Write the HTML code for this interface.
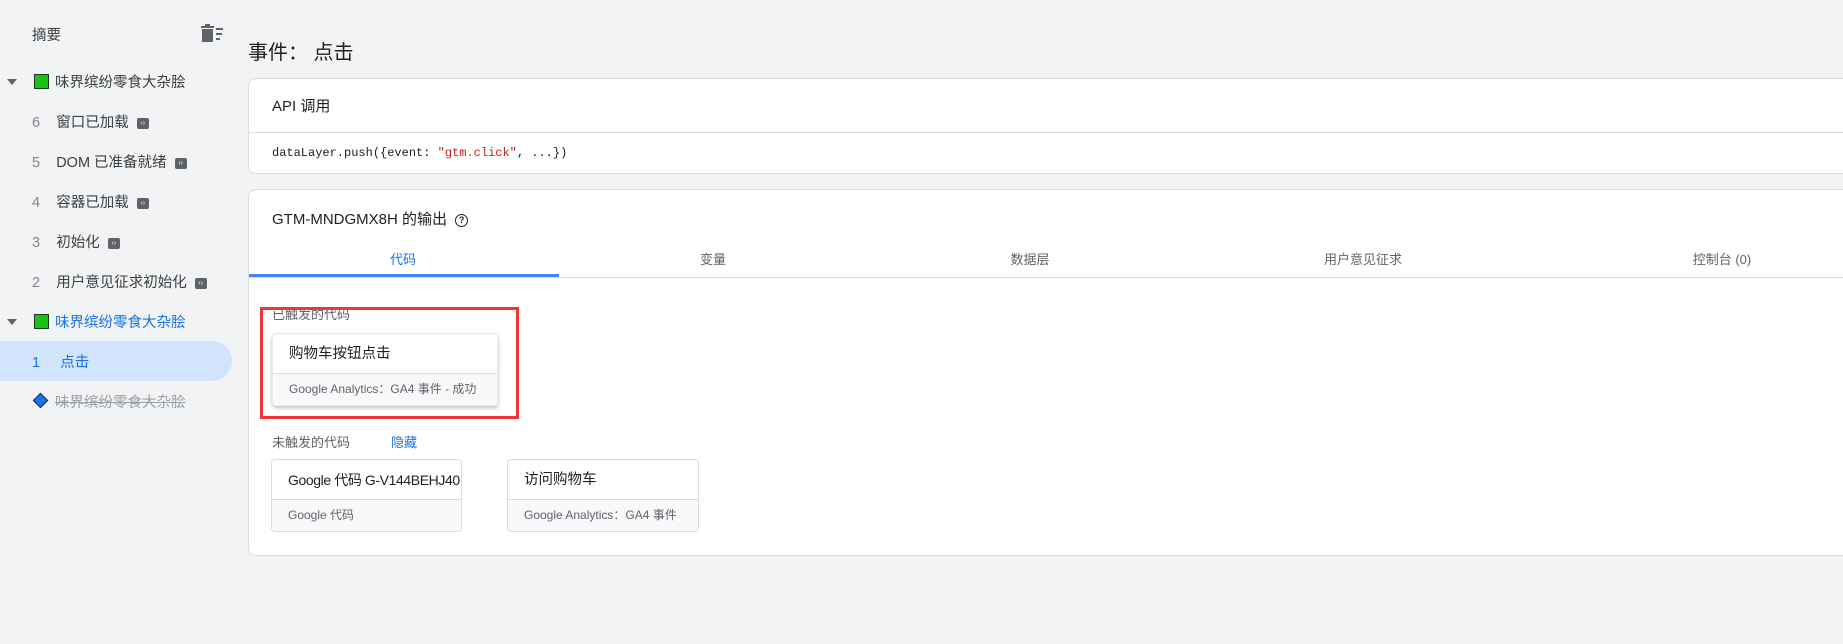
<!DOCTYPE html>
<html><head><meta charset="utf-8"><style>
*{box-sizing:border-box;margin:0;padding:0}
body{width:1843px;height:644px;overflow:hidden;background:#f1f3f4;font-family:"Liberation Sans","Noto Sans CJK SC",sans-serif;color:#202124;position:relative}
.a{position:absolute;white-space:nowrap}
.side{font-size:14.5px;color:#3c4043}
.num{color:#80868b}
.sq{position:absolute;width:15px;height:15px;background:#19c219;border:1px solid #1a3d1a}
.tri{position:absolute;width:0;height:0;border-left:5px solid transparent;border-right:5px solid transparent;border-top:6px solid #5f6368}
.ci{display:inline-block;width:12px;height:11px;background:#5f6368;border-radius:2px;vertical-align:middle;margin-left:8px;color:#fff;font-size:7px;line-height:11px;text-align:center}
.card{position:absolute;background:#fff;border:1px solid #dadce0;border-radius:8px;border-right:none;border-top-right-radius:0;border-bottom-right-radius:0}
.tag{position:absolute;background:#fff;border:1px solid #dadce0;border-radius:4px;overflow:hidden;white-space:nowrap}
.tag .t{height:40px;padding:0 16px;font-size:14.5px;line-height:40px;border-bottom:1px solid #dadce0;overflow:hidden}
.tag .s{height:31px;padding:0 16px;font-size:12px;line-height:31px;color:#5f6368;background:#f8f9fa;overflow:hidden}
.tab{position:absolute;top:249px;font-size:13px;color:#5f6368;transform:translateX(-50%)}
</style></head><body>
<div class="a side" style="left:32px;top:24px">摘要</div>
<svg class="a" style="left:201px;top:24px" width="22" height="18" viewBox="0 0 22 18"><rect x="4" y="0" width="5" height="2" fill="#5f6368"/><rect x="0" y="2" width="13" height="2" fill="#5f6368"/><rect x="1" y="5" width="11" height="13" fill="#5f6368"/><rect x="15" y="4" width="7" height="2" fill="#5f6368"/><rect x="15" y="9" width="6" height="2" fill="#5f6368"/><rect x="15" y="14" width="4" height="2" fill="#5f6368"/></svg>

<div class="tri" style="left:7px;top:79px"></div><div class="sq" style="left:34px;top:74px"></div>
<div class="a side" style="left:55px;top:71px">味界缤纷零食大杂脍</div>
<div class="a side" style="left:32px;top:111px"><span class="num">6</span>&nbsp;&nbsp;&nbsp;&nbsp;窗口已加载<span class="ci">‹›</span></div>
<div class="a side" style="left:32px;top:151px"><span class="num">5</span>&nbsp;&nbsp;&nbsp;&nbsp;DOM 已准备就绪<span class="ci">‹›</span></div>
<div class="a side" style="left:32px;top:191px"><span class="num">4</span>&nbsp;&nbsp;&nbsp;&nbsp;容器已加载<span class="ci">‹›</span></div>
<div class="a side" style="left:32px;top:231px"><span class="num">3</span>&nbsp;&nbsp;&nbsp;&nbsp;初始化<span class="ci">‹›</span></div>
<div class="a side" style="left:32px;top:271px"><span class="num">2</span>&nbsp;&nbsp;&nbsp;&nbsp;用户意见征求初始化<span class="ci">‹›</span></div>
<div class="tri" style="left:7px;top:319px"></div><div class="sq" style="left:34px;top:314px"></div>
<div class="a side" style="left:55px;top:311px;color:#1a73e8">味界缤纷零食大杂脍</div>
<div class="a" style="left:0;top:341px;width:232px;height:40px;background:#d2e3fc;border-radius:0 20px 20px 0"></div>
<div class="a side" style="left:32px;top:351px;color:#1a73e8">1&nbsp;&nbsp;&nbsp;&nbsp;&nbsp;点击</div>
<div class="a" style="left:35px;top:395px;width:11px;height:11px;background:#1a73e8;border:1px solid #0b2a5a;transform:rotate(45deg)"></div>
<div class="a side" style="left:55px;top:391px;color:#9aa0a6;text-decoration:line-through">味界缤纷零食大杂脍</div>

<div class="a" style="left:248px;top:36px;font-size:20px">事件：&nbsp;点击</div>

<div class="card" style="left:248px;top:78px;width:1600px;height:96px">
<div class="a" style="left:23px;top:16px;font-size:15px">API 调用</div>
<div class="a" style="left:0;top:53px;width:100%;height:1px;background:#dadce0"></div>
<div class="a" style="left:23px;top:67px;font-size:12px;font-family:'Liberation Mono','Noto Sans CJK SC',monospace">dataLayer.push({event: <span style="color:#c5221f">"gtm.click"</span>, ...})</div>
</div>

<div class="card" style="left:248px;top:189px;width:1600px;height:367px">
<div class="a" style="left:23px;top:18px;font-size:15px">GTM-MNDGMX8H 的输出 <span style="display:inline-block;width:13px;height:13px;border:1.5px solid #202124;border-radius:50%;font-size:9px;line-height:10px;text-align:center;vertical-align:middle;margin-left:4px;font-weight:bold">?</span></div>
<div class="a" style="left:0;top:87px;width:100%;height:1px;background:#dadce0"></div>
<div class="a" style="left:0;top:84px;width:310px;height:3px;background:#4285f4"></div>
</div>
<div class="tab" style="left:403px;color:#1a73e8">代码</div>
<div class="tab" style="left:713px">变量</div>
<div class="tab" style="left:1030px">数据层</div>
<div class="tab" style="left:1363px">用户意见征求</div>
<div class="tab" style="left:1722px">控制台 (0)</div>

<div class="a" style="left:272px;top:304px;font-size:13px;color:#5f6368">已触发的代码</div>
<div class="a" style="left:260px;top:307px;width:259px;height:112px;border:3px solid #ef3535"></div>
<div class="tag" style="left:272px;top:333px;width:226px;box-shadow:0 2px 4px rgba(0,0,0,.25);border-color:#e8eaed">
<div class="t">购物车按钮点击</div><div class="s">Google Analytics：GA4 事件 - 成功</div></div>

<div class="a" style="left:272px;top:432px;font-size:13px;color:#5f6368">未触发的代码</div>
<div class="a" style="left:391px;top:432px;font-size:13px;color:#1a73e8">隐藏</div>
<div class="tag" style="left:271px;top:459px;width:191px"><div class="t" style="font-size:14px;letter-spacing:-0.4px;padding-right:4px">Google 代码 G-V144BEHJ40</div><div class="s">Google 代码</div></div>
<div class="tag" style="left:507px;top:459px;width:192px"><div class="t">访问购物车</div><div class="s">Google Analytics：GA4 事件</div></div>
</body></html>
